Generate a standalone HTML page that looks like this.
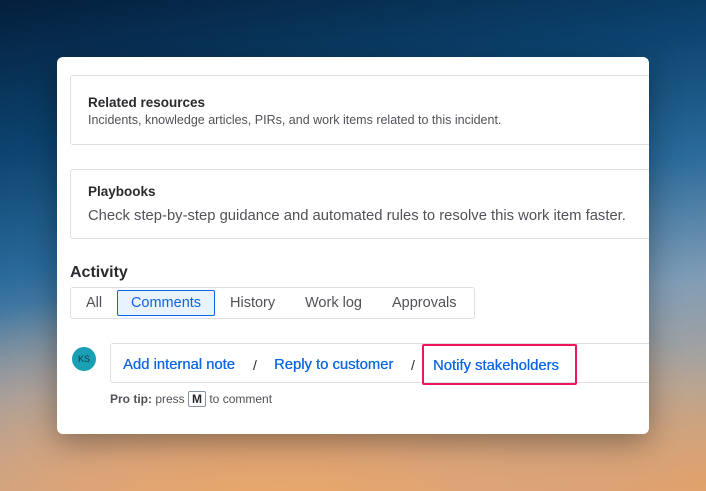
<!DOCTYPE html>
<html><head><style>
body{margin:0;width:706px;height:491px;overflow:hidden;font-family:"Liberation Sans",sans-serif;
background:
radial-gradient(ellipse 600px 260px at 40% 540px,#f0a860 0%,#dca478 40%,rgba(200,170,150,0) 100%),
linear-gradient(170deg,#041f3c 0%,#0c4470 25%,#2a6a9a 45%,#7f9cb6 65%,#b0a498 82%,#e8a060 100%);}
.card{position:absolute;left:57px;top:57px;width:592px;height:377px;background:#fff;border-radius:6px;box-shadow:0 8px 30px rgba(0,0,0,.35);overflow:hidden}
.box{position:absolute;left:13px;width:600px;border:1px solid #dcdfe4;border-radius:3px}
.t{font-weight:bold;font-size:13.5px;color:#292a2e;position:absolute;left:17px}
.s{color:#505258;position:absolute;left:17px;white-space:nowrap}
a{color:#0c66e4;text-decoration:none;font-size:14.8px;white-space:nowrap;text-shadow:0.3px 0 0 #0c66e4}
</style></head><body>
<div class="card">
 <div class="box" style="top:18px;height:68px"><div class="t" style="top:19px">Related resources</div><div class="s" style="top:37px;font-size:12.5px">Incidents, knowledge articles, PIRs, and work items related to this incident.</div></div>
 <div class="box" style="top:112px;height:68px"><div class="t" style="top:14px">Playbooks</div><div class="s" style="top:38px;font-size:14.8px">Check step-by-step guidance and automated rules to resolve this work item faster.</div></div>
 <div style="position:absolute;left:13px;top:207px;font-weight:bold;font-size:16px;color:#292a2e">Activity</div>
 <div style="position:absolute;left:13px;top:230px;width:403px;height:30px;border:1px solid #dcdfe4;border-radius:3px;font-size:14.5px;color:#505258">
  <span style="position:absolute;left:15px;top:7px">All</span>
  <span style="position:absolute;left:46px;top:2px;width:96px;height:24px;border:1px solid #0c66e4;background:#e9f2ff;border-radius:2px;color:#0c66e4;text-align:center;line-height:24px">Comments</span>
  <span style="position:absolute;left:159px;top:7px">History</span>
  <span style="position:absolute;left:234px;top:7px">Work log</span>
  <span style="position:absolute;left:321px;top:7px">Approvals</span>
 </div>
 <div style="position:absolute;left:15px;top:290px;width:24px;height:24px;border-radius:50%;background:#1a9fb5;color:#0a3a4a;font-size:9px;line-height:24px;text-align:center">KS</div>
 <div style="position:absolute;left:53px;top:286px;width:600px;height:38px;border:1px solid #dcdfe4;border-radius:3px;font-size:14px">
  <a style="position:absolute;left:12px;top:13px">Add internal note</a>
  <span style="position:absolute;left:142px;top:13px;color:#292a2e">/</span>
  <a style="position:absolute;left:163px;top:13px">Reply to customer</a>
  <span style="position:absolute;left:300px;top:13px;color:#292a2e">/</span>
 </div>
 <div style="position:absolute;left:365px;top:287px;width:151px;height:37px;border:2px solid #f0145a;border-radius:2px;font-size:14px"><a style="position:absolute;left:9px;top:12px">Notify stakeholders</a></div>
 <div style="position:absolute;left:53px;top:334px;font-size:12px;color:#505258"><b>Pro tip:</b> press <span style="display:inline-block;border:1px solid #8590a2;border-radius:2px;padding:0 3px;font-weight:bold;color:#292a2e">M</span> to comment</div>
</div>
</body></html>
